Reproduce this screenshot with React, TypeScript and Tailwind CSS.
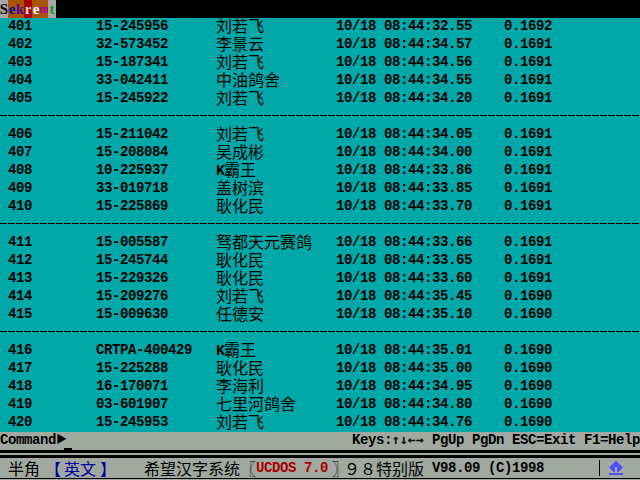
const groups = [
  [
    ["401", "15-245956", "刘若飞", "10/18 08:44:32.55", "0.1692"],
    ["402", "32-573452", "李景云", "10/18 08:44:34.57", "0.1691"],
    ["403", "15-187341", "刘若飞", "10/18 08:44:34.56", "0.1691"],
    ["404", "33-042411", "中油鸽舍", "10/18 08:44:34.55", "0.1691"],
    ["405", "15-245922", "刘若飞", "10/18 08:44:34.20", "0.1691"],
  ],
  [
    ["406", "15-211042", "刘若飞", "10/18 08:44:34.05", "0.1691"],
    ["407", "15-208084", "吴成彬", "10/18 08:44:34.00", "0.1691"],
    ["408", "10-225937", "K霸王", "10/18 08:44:33.86", "0.1691"],
    ["409", "33-019718", "盖树滨", "10/18 08:44:33.85", "0.1691"],
    ["410", "15-225869", "耿化民", "10/18 08:44:33.70", "0.1691"],
  ],
  [
    ["411", "15-005587", "驽都天元赛鸽", "10/18 08:44:33.66", "0.1691"],
    ["412", "15-245744", "耿化民", "10/18 08:44:33.65", "0.1691"],
    ["413", "15-229326", "耿化民", "10/18 08:44:33.60", "0.1691"],
    ["414", "15-209276", "刘若飞", "10/18 08:44:35.45", "0.1690"],
    ["415", "15-009630", "任德安", "10/18 08:44:35.10", "0.1690"],
  ],
  [
    ["416", "CRTPA-400429", "K霸王", "10/18 08:44:35.01", "0.1690"],
    ["417", "15-225288", "耿化民", "10/18 08:44:35.00", "0.1690"],
    ["418", "16-170071", "李海利", "10/18 08:44:34.95", "0.1690"],
    ["419", "03-601907", "七里河鸽舍", "10/18 08:44:34.80", "0.1690"],
    ["420", "15-245953", "刘若飞", "10/18 08:44:34.76", "0.1690"],
  ],
];

const mono = "font-['Liberation_Mono','Noto_Sans_CJK_SC',monospace] font-bold text-[14px] tracking-[-0.4px]";
const cjk = "font-['Noto_Sans_CJK_SC',sans-serif] text-[16px] font-normal tracking-normal";

function Name({ text }: { text: string }) {
  if (text.startsWith("K")) {
    return (
      <span className="w-[120px] flex items-center pb-[4px]">
        <span className="w-2 pt-[5px] text-[15px] font-black">K</span>
        <span className={cjk}>{text.slice(1)}</span>
      </span>
    );
  }
  return <span className={`w-[120px] pb-[4px] ${cjk}`}>{text}</span>;
}

export default function App() {
  return (
    <div className={`w-[640px] h-[480px] overflow-hidden flex flex-col bg-[#a0a8a0] text-black ${mono}`}>
      <div className="h-[18px] bg-black flex leading-[18px] font-['Liberation_Serif',serif] text-[15px] tracking-normal">
        <span className="w-2 flex justify-center bg-[#a8a8a8] text-black">S</span>
        <span className="w-2 flex justify-center bg-[#a85400] text-[#0000a8]">e</span>
        <span className="w-2 flex justify-center bg-[#a85400] text-[#5400a8]">k</span>
        <span className="w-2 flex justify-center bg-[#a80000] text-[#d8d8d8]">r</span>
        <span className="w-2 flex justify-center bg-[#a85400] text-white">e</span>
        <span className="w-2 flex justify-center bg-[#a85400] text-[#a800a8] text-[12px]">m</span>
        <span className="w-2 flex justify-center bg-[#a8a8a8] text-[#00a800]">t</span>
      </div>
      <div className="h-[414px] bg-[#00a8a8] flex flex-col">
        {groups.map((g, i) => (
          <div key={i} className="flex flex-col">
            {g.map((r) => (
              <div key={r[0]} className="h-[18px] flex items-center whitespace-nowrap leading-[18px]">
                <span className="w-[96px] pl-2 pb-[2px]">{r[0]}</span>
                <span className="w-[120px] pb-[2px]">{r[1]}</span>
                <Name text={r[2]} />
                <span className="w-[168px] pb-[2px]">{r[3]}</span>
                <span className="pb-[2px]">{r[4]}</span>
              </div>
            ))}
            {i < 3 && (
              <div className="h-[18px] pt-[7px]">
                <div className="w-full h-px bg-[repeating-linear-gradient(90deg,#000_0_7px,transparent_7px_8px)]" />
              </div>
            )}
          </div>
        ))}
      </div>
      <div className="h-[18px] flex items-center justify-between leading-[18px] whitespace-nowrap">
        <div className="flex items-center">
          <span className="pb-[2px]">Command</span>
          <span className="w-2 text-[11px] pb-[2px]">▶</span>
          <span className="w-2 h-[2px] bg-black self-end mb-px" />
        </div>
        <div className="flex pb-[2px]">
          <span>Keys:</span>
          <span className="w-[32px] font-['DejaVu_Sans_Mono',monospace] text-[13px] tracking-[0.2px]">↑↓←→</span>
          <span>&nbsp;PgUp PgDn ESC=Exit F1=Help</span>
        </div>
      </div>
      <div className="h-[3px] bg-black" />
      <div className="h-[2px]" />
      <div className="h-[3px] bg-black" />
      <div className="h-[20px] flex items-center whitespace-nowrap leading-[20px]">
        <span className={`w-[45px] pl-2 ${cjk}`}>半角</span>
        <span className={`w-[19px] text-[#0000a8] ${cjk} font-bold`}>【</span>
        <span className={`w-[32px] text-[#0000a8] ${cjk}`}>英文</span>
        <span className={`w-[48px] pl-1 text-[#0000a8] ${cjk} font-bold`}>】</span>
        <span className={`w-[96px] ${cjk}`}>希望汉字系统</span>
        <span className={`w-[16px] ${cjk}`}>〖</span>
        <span className="w-[72px] text-[#a80000]">UCDOS 7.0</span>
        <span className={`w-[16px] pl-1 ${cjk}`}>〗</span>
        <span className={`w-[32px] ${cjk}`}>９８</span>
        <span className={`w-[56px] ${cjk}`}>特别版</span>
        <span className="w-[167px]">V98.09 (C)1998</span>
        <span className="w-px h-4 bg-black" />
        <svg className="ml-[8px]" width="16" height="14" viewBox="0 0 16 14" fill="#5050f8">
          <path d="M7 0h2v1h1v1h1v1h1v1h1v1h1v1h1v1h-1v1h-1v1h-1v1h-1v1h-2V6H7v5H5v-1H4V9H3V8H2V7H1V6h1V5h1V4h1V3h1V2h1V1h1z" />
          <path d="M1 12h14v2H1z" />
        </svg>
      </div>
      <div className="h-px bg-black" />
    </div>
  );
}
